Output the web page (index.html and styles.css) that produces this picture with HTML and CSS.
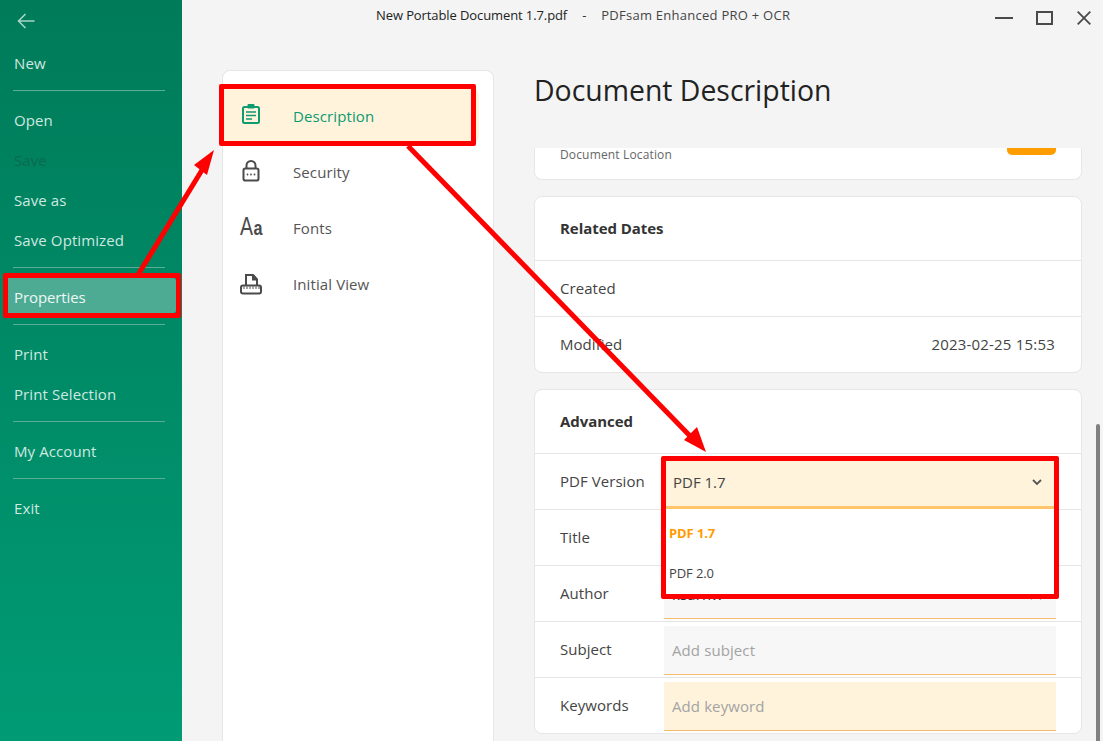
FILE: index.html
```html
<!DOCTYPE html>
<html lang="en">
<head>
<meta charset="utf-8">
<title>PDFsam Enhanced PRO + OCR</title>
<link rel="stylesheet" href="styles.css">
</head>
<body>
<div class="app">
  <aside class="sidebar">
    <button class="back" aria-label="Back">
      <svg width="18" height="16" viewBox="0 0 18 16"><path d="M17.500 8H1.500M8.500 1L1.500 8l7 7" fill="none" stroke="#a8d5c7" stroke-width="1.600"/></svg>
    </button>
    <div class="menu-item">New</div>
    <hr class="menu-sep">
    <div class="menu-item">Open</div>
    <div class="menu-item disabled">Save</div>
    <div class="menu-item">Save as</div>
    <div class="menu-item">Save Optimized</div>
    <hr class="menu-sep">
    <div class="menu-item active">Properties</div>
    <hr class="menu-sep">
    <div class="menu-item">Print</div>
    <div class="menu-item">Print Selection</div>
    <hr class="menu-sep">
    <div class="menu-item">My Account</div>
    <hr class="menu-sep">
    <div class="menu-item">Exit</div>
  </aside>

  <div class="workspace">
    <header class="titlebar">
      <div class="win-title"><span class="doc">New Portable Document 1.7.pdf</span><span class="dash">-</span><span class="prod">PDFsam Enhanced PRO + OCR</span></div>
      <div class="win-controls">
        <svg width="18" height="18" viewBox="0 0 18 18"><path d="M0 9h18" stroke="#4a4a4a" stroke-width="2"/></svg>
        <svg width="17" height="18" viewBox="0 0 17 18"><rect x="1" y="3" width="15" height="12" fill="none" stroke="#4a4a4a" stroke-width="2"/></svg>
        <svg class="win-close" width="14" height="14" viewBox="0 0 14 14"><path d="M.7.7l12.600 12.600M13.300.7L.7 13.300" stroke="#4a4a4a" stroke-width="1.800"/></svg>
      </div>
    </header>

    <div class="content">
      <nav class="side-card">
        <div class="nav-item current">
          <svg width="24" height="24" viewBox="0 0 24 24"><rect x="4" y="3" width="16" height="16" rx="1.500" fill="none" stroke="#0f9b72" stroke-width="2"/><rect x="8.500" y="0" width="7" height="4.500" rx="1" fill="#0f9b72"/><path d="M7 8h10M7 11.500h10M7 15h6" stroke="#0f9b72" stroke-width="1.700"/></svg>
          <span>Description</span>
        </div>
        <div class="nav-item">
          <svg width="24" height="24" viewBox="0 0 24 24"><path d="M7.500 9V5.500a4.500 4.500 0 0 1 9 0V9" fill="none" stroke="#4b4b4b" stroke-width="2"/><rect x="4.500" y="8.500" width="15" height="12" rx="1.800" fill="none" stroke="#4b4b4b" stroke-width="2"/><circle cx="8.500" cy="14.500" r=".9" fill="#4b4b4b"/><circle cx="12" cy="14.500" r=".9" fill="#4b4b4b"/><circle cx="15.500" cy="14.500" r=".9" fill="#4b4b4b"/></svg>
          <span>Security</span>
        </div>
        <div class="nav-item">
          <svg class="aa" width="24" height="24" viewBox="0 0 24 24"><text x="1" y="19" font-size="25" textLength="13" lengthAdjust="spacingAndGlyphs">A</text><text x="14.500" y="19" font-size="20" font-weight="700" textLength="9" lengthAdjust="spacingAndGlyphs">a</text></svg>
          <span>Fonts</span>
        </div>
        <div class="nav-item">
          <svg width="24" height="24" viewBox="0 0 24 24"><path d="M7 13V3h7l4 4.500V13" fill="none" stroke="#4b4b4b" stroke-width="2"/><path d="M13 2.500h1.500l4.500 5v1h-6z" fill="#4b4b4b"/><rect x="2" y="13.500" width="20" height="8" rx="2" fill="none" stroke="#4b4b4b" stroke-width="2"/><path d="M5 14.500v2.500M8 14.500v2.500M11 14.500v2.500M14 14.500v2.500M17 14.500v2.500M20 14.500v2.500" stroke="#4b4b4b" stroke-width="1"/></svg>
          <span>Initial View</span>
        </div>
      </nav>

      <section class="detail">
        <h1 class="heading">Document Description</h1>
        <div class="scroller">
          <div class="card clipped">
            <div class="clipped-inner">
              <span class="loc">Document Location</span>
              <span class="open-btn"></span>
            </div>
          </div>
          <div class="card">
            <div class="card-head">Related Dates</div>
            <div class="row"><span class="label">Created</span></div>
            <div class="row"><span class="label">Modified</span><span class="label value">2023-02-25 15:53</span></div>
          </div>
          <div class="card">
            <div class="card-head">Advanced</div>
            <div class="row"><span class="label">PDF Version</span><div class="field">PDF 1.7</div></div>
            <div class="row"><span class="label">Title</span><div class="field"></div></div>
            <div class="row"><span class="label">Author</span><div class="field"><span class="author">ksarnw</span>
              <svg class="clear" width="10" height="10" viewBox="0 0 10 10"><path d="M.5.5l9 9M9.500.5l-9 9" stroke="#777" stroke-width="1"/></svg></div></div>
            <div class="row"><span class="label">Subject</span><div class="field placeholder">Add subject</div></div>
            <div class="row"><span class="label">Keywords</span><div class="field placeholder hover">Add keyword</div></div>
          </div>
        </div>
      </section>
    </div>
  </div>

  <div class="scrollbar"></div>

  <div class="dropdown">
    <div class="select">PDF 1.7
      <svg width="10" height="7" viewBox="0 0 10 7"><path d="M1 1l4 4 4-4" fill="none" stroke="#555" stroke-width="1.800"/></svg>
    </div>
    <div class="list">
      <div class="option selected">PDF 1.7</div>
      <div class="option">PDF 2.0</div>
    </div>
  </div>

  <div class="mark mark-props"></div>
  <div class="mark mark-desc"></div>
  <div class="mark mark-drop"></div>
  <svg class="arrows" width="1103" height="741" viewBox="0 0 1103 741">
    <path d="M138.500 274L202 170" stroke="#f00" stroke-width="5" fill="none"/>
    <path d="M214 150L194 165L207 175z" fill="#f00"/>
    <path d="M408 146L692 438" stroke="#f00" stroke-width="5" fill="none"/>
    <path d="M706 452L684 440L697 427z" fill="#f00"/>
  </svg>
</div>
</body>
</html>
```
FILE: styles.css
```css
* { box-sizing: border-box; }
html, body { margin: 0; padding: 0; height: 100%; }
body { font-family: "Open Sans", "Noto Sans", sans-serif; color: #333; overflow: hidden; }
.app { position: relative; display: flex; width: 1103px; height: 741px; background: #f4f4f4; overflow: hidden; }

.sidebar { flex: 0 0 182px; background: linear-gradient(180deg, #007b59 0%, #009b74 100%); padding-top: 43px; color: #cfe8e0; position: relative; }
.back { position: absolute; left: 17px; top: 13px; padding: 0; border: 0; background: none; display: flex; }
.menu-item { height: 40px; line-height: 40px; padding-left: 14px; font-size: 15px; letter-spacing: 0.1px; }
.menu-item.disabled { color: #0b6a50; }
.menu-item.active { position: relative; color: #eef7f4; z-index: 0; letter-spacing: -0.1px; }
.menu-item.active::before { content: ""; position: absolute; left: 8px; right: 6px; top: 1px; bottom: 4px; background: #4dab93; border-radius: 0 3px 3px 0; z-index: -1; }
.menu-sep { margin: 7px 17px 9px 13px; border: 0; height: 1px; background: #5aae97; }

.workspace { flex: 1; display: flex; flex-direction: column; min-width: 0; }
.titlebar { flex: 0 0 70px; position: relative; }
.win-title { position: absolute; left: 194px; top: 6px; font-size: 13px; letter-spacing: -0.1px; line-height: 18px; white-space: nowrap; color: #222; }
.win-title .dash { margin: 0 15px; color: #333; }
.win-title .prod { color: #444; letter-spacing: 0.26px; }
.win-controls { position: absolute; right: 12px; top: 9px; display: flex; gap: 23px; align-items: center; height: 18px; }
.win-close { margin-left: 1px; }

.content { flex: 1; display: flex; padding-left: 40px; min-height: 0; }
.side-card { flex: 0 0 272px; background: #fff; border: 1px solid #e6e6e6; border-bottom: 0; border-radius: 8px 8px 0 0; padding-top: 17px; }
.nav-item { height: 56px; display: flex; align-items: center; font-size: 15px; letter-spacing: 0.1px; color: #555; padding-left: 16px; }
.nav-item svg { flex: 0 0 24px; margin-right: 30px; }
.nav-item.current { color: #0a9a70; background: #fff3dc; border-radius: 0 8px 8px 0; margin-right: 14px; }
.nav-item .aa { font-family: "Liberation Sans", sans-serif; fill: #4b4b4b; letter-spacing: 0; overflow: visible; }

.detail { width: 548px; margin-left: 40px; display: flex; flex-direction: column; min-height: 0; }
.heading { margin: 0; height: 78px; font-size: 28.4px; font-weight: 400; line-height: 40px; color: #222; white-space: nowrap; }
.scroller { flex: 1; overflow: hidden; display: flex; flex-direction: column; gap: 16px; }
.card { background: #fff; border: 1px solid #e6e6e6; border-radius: 8px; flex: none; }
.clipped { border-top: 0; border-radius: 0 0 8px 8px; height: 32px; }
.clipped-inner { display: flex; justify-content: space-between; padding: 0 25px; align-items: flex-start; }
.loc { font-size: 12px; line-height: 12px; margin-top: 1px; letter-spacing: 0.15px; color: #666; }
.open-btn { width: 49px; height: 7px; background: #ff9c00; border-radius: 0 0 5px 5px; }
.card-head { height: 63px; padding-left: 25px; line-height: 62px; font-size: 15px; font-weight: 700; letter-spacing: -0.05px; color: #333; }
.row { height: 56px; border-top: 1px solid #e6e6e6; display: flex; align-items: center; justify-content: space-between; padding: 0 25px; font-size: 15px; letter-spacing: 0; color: #444; }
.label { flex: none; margin-bottom: 2px; letter-spacing: 0.05px; }
.value { letter-spacing: 0.2px; margin-right: 1px; }
.field { flex: 0 0 392px; height: 49px; margin-top: 2px; background: #f7f7f7; border-bottom: 1px solid #f5bb6c; padding-left: 8px; line-height: 48px; font-size: 15px; letter-spacing: 0.1px; color: #444; position: relative; }
.placeholder { color: #a3a3a3; }
.hover { background: #fff3dc; }
.author { color: #333; }
.clear { position: absolute; right: 15px; top: 20px; }

.scrollbar { position: absolute; left: 1096px; top: 424px; width: 4px; height: 317px; background: #808080; border-radius: 2px 2px 0 0; }

.dropdown { position: absolute; left: 664px; top: 460px; width: 392px; height: 136px; background: #fff; }
.select { height: 49px; background: #fff3dc; border-bottom: 3px solid #ffc56b; padding: 0 14px 2px 9px; font-size: 15px; color: #444; display: flex; justify-content: space-between; align-items: center; }
.list { padding-top: 4px; }
.option { height: 40px; line-height: 40px; padding-left: 5px; font-size: 13px; letter-spacing: -0.1px; color: #444; }
.option.selected { font-weight: 700; color: #ff9c00; }

.mark { position: absolute; border: 5px solid #f00; border-radius: 2px; }
.mark-props { left: 3px; top: 273px; width: 178px; height: 45px; }
.mark-desc { left: 219px; top: 84px; width: 257px; height: 62px; }
.mark-drop { left: 661px; top: 456px; width: 398px; height: 143px; }
.arrows { position: absolute; left: 0; top: 0; pointer-events: none; }
```
